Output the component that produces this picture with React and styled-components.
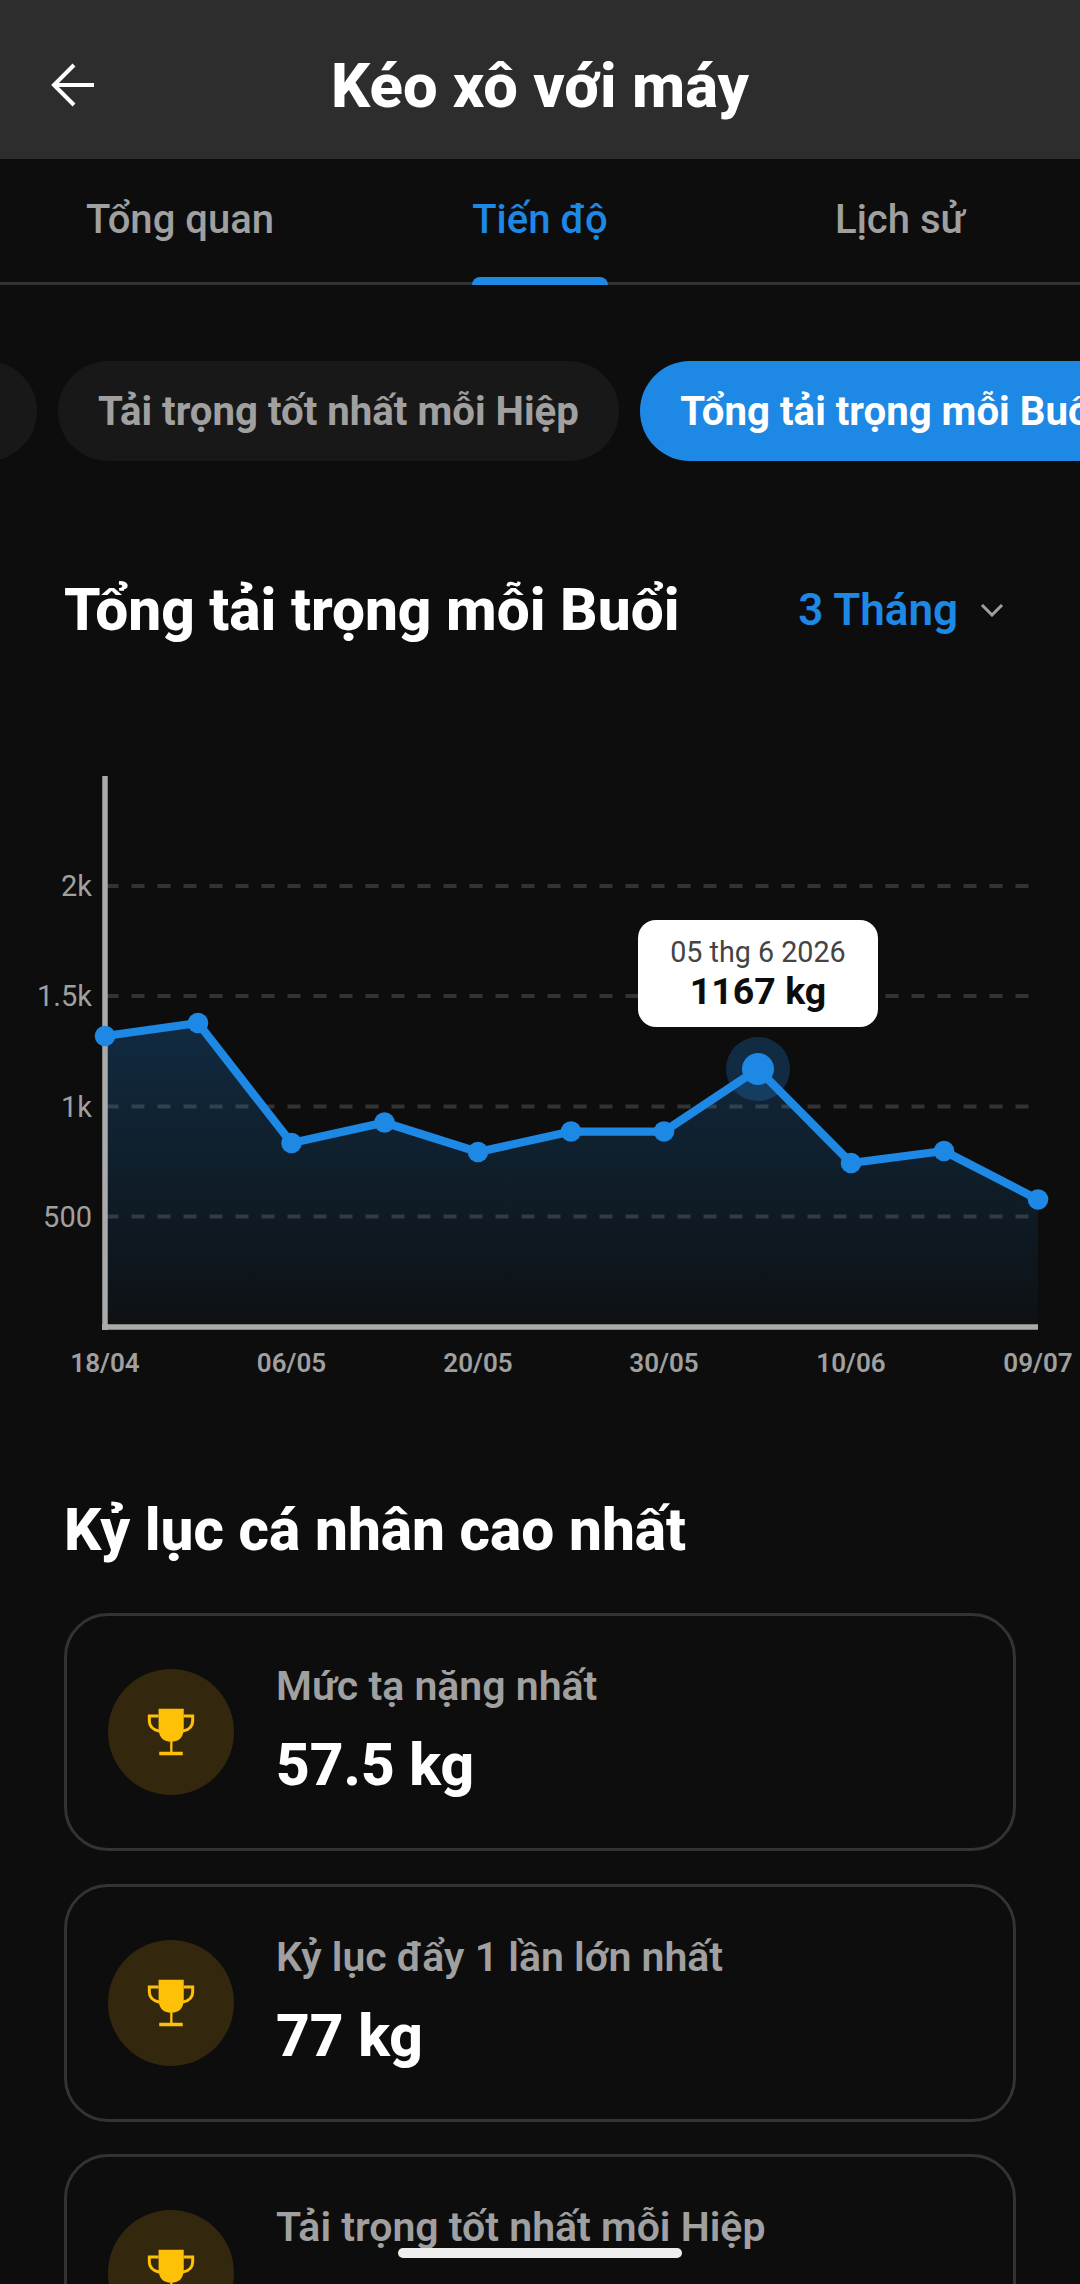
import React from "react";
import styled, { createGlobalStyle } from "styled-components";

const Global = createGlobalStyle`
  html, body {
    margin: 0;
    padding: 0;
    background: #0d0d0d;
    font-family: Roboto, "Noto Sans", sans-serif;
  }
`;

// PAGE
const Page = styled.div`
  position: relative;
  width: 1080px;
  height: 2284px;
  overflow: hidden;
  background: #0d0d0d;
`;

// HEADER
const Header = styled.header`
  position: relative;
  height: 159px;
  box-sizing: border-box;
  padding-top: 12px;
  display: flex;
  align-items: center;
  justify-content: center;
  background: #2d2d2d;
`;
const BackIcon = styled.svg`
  position: absolute;
  left: 50px;
  top: 62px;
`;
const Title = styled.h1`
  margin: 0;
  font-size: 61.5px;
  font-weight: 800;
  color: #fff;
`;

// TABS
const Tabs = styled.nav`
  height: 126px;
  box-sizing: border-box;
  display: grid;
  grid-template-columns: repeat(3, 1fr);
  border-bottom: 3px solid #333;
`;
const Tab = styled.div`
  display: flex;
  justify-content: center;
`;
const TabLabel = styled.span`
  position: relative;
  height: 126px;
  box-sizing: border-box;
  padding-top: 32px;
  font-size: 40px;
  line-height: 58px;
  font-weight: 500;
  color: ${(p) => (p.$active ? "#1e88e5" : "#a0a0a0")};
  ${(p) =>
    p.$active &&
    `&::after {
      content: "";
      position: absolute;
      left: 0;
      right: 0;
      bottom: 0;
      height: 8px;
      border-radius: 8px 8px 0 0;
      background: #1e88e5;
    }`}
`;

// CHIPS
const ChipRow = styled.div`
  margin-top: 76px;
  display: flex;
  gap: 21.5px;
  overflow: hidden;
`;
const Chip = styled.div`
  flex: none;
  height: 100px;
  box-sizing: border-box;
  padding: 0 40px;
  border-radius: 50px;
  display: flex;
  align-items: center;
  font-size: 40.2px;
  font-weight: 700;
  white-space: nowrap;
  color: ${(p) => (p.$active ? "#fff" : "#a0a0a0")};
  background: ${(p) => (p.$active ? "#1e88e5" : "#181818")};
`;
const OffChip = styled(Chip)`
  width: 200px;
  margin-left: -163.5px;
`;

// CHART
const ChartHead = styled.div`
  margin-top: 100px;
  height: 98px;
  padding: 0 64px;
  display: flex;
  align-items: center;
  justify-content: space-between;
`;
const ChartTitle = styled.h2`
  margin: 0;
  font-size: 58.6px;
  font-weight: 800;
  color: #fff;
`;
const Range = styled.div`
  display: flex;
  align-items: center;
  gap: 22px;
  padding-right: 12px;
  font-size: 44px;
  font-weight: 600;
  color: #1e88e5;
`;
const ChartBox = styled.div`
  position: relative;
  margin-top: 81px;
  height: 660px;
`;
const ChartSvg = styled.svg`
  display: block;
  font-family: Roboto, sans-serif;
`;
const YLabel = styled.text`
  font-size: 29px;
  fill: #a0a0a0;
  text-anchor: end;
`;
const XLabel = styled.text`
  font-size: 26px;
  font-weight: 600;
  fill: #a0a0a0;
  text-anchor: middle;
`;
const Tooltip = styled.div`
  position: absolute;
  left: 638px;
  top: 180px;
  width: 240px;
  height: 107px;
  box-sizing: border-box;
  padding-top: 15px;
  border-radius: 18px;
  background: #fff;
  text-align: center;
`;
const TipDate = styled.div`
  font-size: 28.7px;
  line-height: 34px;
  color: #444;
`;
const TipValue = styled.div`
  font-size: 37.5px;
  line-height: 44px;
  font-weight: 700;
  color: #0d0d0d;
`;

// RECORDS
const SectionTitle = styled.h2`
  margin: 95px 0 0;
  padding: 0 64px;
  height: 70px;
  font-size: 58.6px;
  line-height: 70px;
  font-weight: 800;
  color: #fff;
`;
const Cards = styled.div`
  margin: 48px 64px 0;
  display: flex;
  flex-direction: column;
  gap: 32.5px;
`;
const Card = styled.div`
  flex: none;
  height: 238px;
  box-sizing: border-box;
  padding: 0 41px;
  display: flex;
  align-items: center;
  gap: 42px;
  border: 3px solid #333;
  border-radius: 44px;
`;
const IconCircle = styled.div`
  flex: none;
  width: 126px;
  height: 126px;
  border-radius: 50%;
  display: flex;
  align-items: center;
  justify-content: center;
  background: #33280e;
`;
const CardText = styled.div`
  display: flex;
  flex-direction: column;
  gap: 24px;
  padding-bottom: 4px;
`;
const CardLabel = styled.div`
  font-size: 41px;
  line-height: 46px;
  font-weight: 600;
  color: #a0a0a0;
`;
const CardValue = styled.div`
  height: 64px;
  font-size: 58.6px;
  line-height: 64px;
  font-weight: 800;
  color: #fff;
`;
const HomeBar = styled.div`
  position: absolute;
  left: 398px;
  bottom: 26px;
  width: 284px;
  height: 10px;
  border-radius: 5px;
  background: #eee;
`;

const points = [
  [105, 1036],
  [198, 1023],
  [291.5, 1143],
  [384.5, 1122.5],
  [478, 1152],
  [571, 1131.5],
  [664, 1131.5],
  [758, 1069],
  [851, 1163],
  [944, 1151],
  [1038, 1199.5],
];
const line = points.map((p) => p.join(",")).join(" ");
const area = `105,1327 ${line} 1038,1327`;
const yTicks = [
  ["2k", 886],
  ["1.5k", 996],
  ["1k", 1106.5],
  ["500", 1216.5],
];
const xTicks = [
  ["18/04", 105],
  ["06/05", 291.5],
  ["20/05", 478],
  ["30/05", 664],
  ["10/06", 851],
  ["09/07", 1038],
];
// the third value lies below the fold
const records = [
  ["Mức tạ nặng nhất", "57.5 kg"],
  ["Kỷ lục đẩy 1 lần lớn nhất", "77 kg"],
  ["Tải trọng tốt nhất mỗi Hiệp", ""],
];

const Trophy = () => (
  <svg width="48" height="48" viewBox="170 175 145 145">
    <path
      fill="#ffc107"
      d="M205 177H281V235Q281 277 243 277Q205 277 205 235ZM240 275H247V308H240ZM207 307H278V318H207Z"
    />
    <path
      fill="none"
      stroke="#ffc107"
      strokeWidth="9"
      d="M205 199H177V214Q177 238 208 245M281 199H308V214Q308 238 278 245"
    />
  </svg>
);

const Chart = () => (
  <ChartBox>
    <ChartSvg width="1080" height="660" viewBox="0 740 1080 660">
      <defs>
        <linearGradient id="fade" x1="0" y1="0" x2="0" y2="1">
          <stop offset="0" stopColor="#1e88e5" stopOpacity="0.24" />
          <stop offset="1" stopColor="#1e88e5" stopOpacity="0.03" />
        </linearGradient>
      </defs>
      {yTicks.map(([label, y]) => (
        <g key={label}>
          <line x1="105.5" x2="1038" y1={y} y2={y} stroke="#333" strokeWidth="4" strokeDasharray="13 13" />
          <YLabel x="92" y={y + 10}>{label}</YLabel>
        </g>
      ))}
      <polygon points={area} fill="url(#fade)" />
      <line x1="105" x2="105" y1="776" y2="1330" stroke="#aaa" strokeWidth="5.5" />
      <line x1="102" x2="1038" y1="1327" y2="1327" stroke="#aaa" strokeWidth="5.5" />
      <polyline points={line} fill="none" stroke="#1e88e5" strokeWidth="8.25" strokeLinejoin="round" />
      <circle cx="758" cy="1069" r="32" fill="#1e88e5" fillOpacity="0.25" />
      {points.map(([x, y]) => (
        <circle key={x} cx={x} cy={y} r={x === 758 ? 16 : 10.3} fill="#1e88e5" />
      ))}
      {xTicks.map(([label, x]) => (
        <XLabel key={label} x={x} y="1372">{label}</XLabel>
      ))}
    </ChartSvg>
    <Tooltip>
      <TipDate>05 thg 6 2026</TipDate>
      <TipValue>1167 kg</TipValue>
    </Tooltip>
  </ChartBox>
);

const App = () => {
  return (
    <Page>
      <Global />
      <Header>
        <BackIcon width="48" height="48" viewBox="50 62 48 48" fill="none" stroke="#fff" strokeWidth="4">
          <path d="M94 85H56M74 65L54 85L74 105" />
        </BackIcon>
        <Title>Kéo xô với máy</Title>
      </Header>
      <Tabs>
        <Tab><TabLabel>Tổng quan</TabLabel></Tab>
        <Tab><TabLabel $active>Tiến độ</TabLabel></Tab>
        <Tab><TabLabel>Lịch sử</TabLabel></Tab>
      </Tabs>
      <ChipRow>
        <OffChip />
        <Chip>Tải trọng tốt nhất mỗi Hiệp</Chip>
        <Chip $active>Tổng tải trọng mỗi Buổi</Chip>
      </ChipRow>
      <ChartHead>
        <ChartTitle>Tổng tải trọng mỗi Buổi</ChartTitle>
        <Range>
          3 Tháng
          <svg width="24" height="14" viewBox="0 0 24 14" fill="none" stroke="#a0a0a0" strokeWidth="3">
            <path d="M2 2L12 12L22 2" />
          </svg>
        </Range>
      </ChartHead>
      <Chart />
      <SectionTitle>Kỷ lục cá nhân cao nhất</SectionTitle>
      <Cards>
        {records.map(([label, value]) => (
          <Card key={label}>
            <IconCircle><Trophy /></IconCircle>
            <CardText>
              <CardLabel>{label}</CardLabel>
              <CardValue>{value}</CardValue>
            </CardText>
          </Card>
        ))}
      </Cards>
      <HomeBar />
    </Page>
  );
};

export default App;
